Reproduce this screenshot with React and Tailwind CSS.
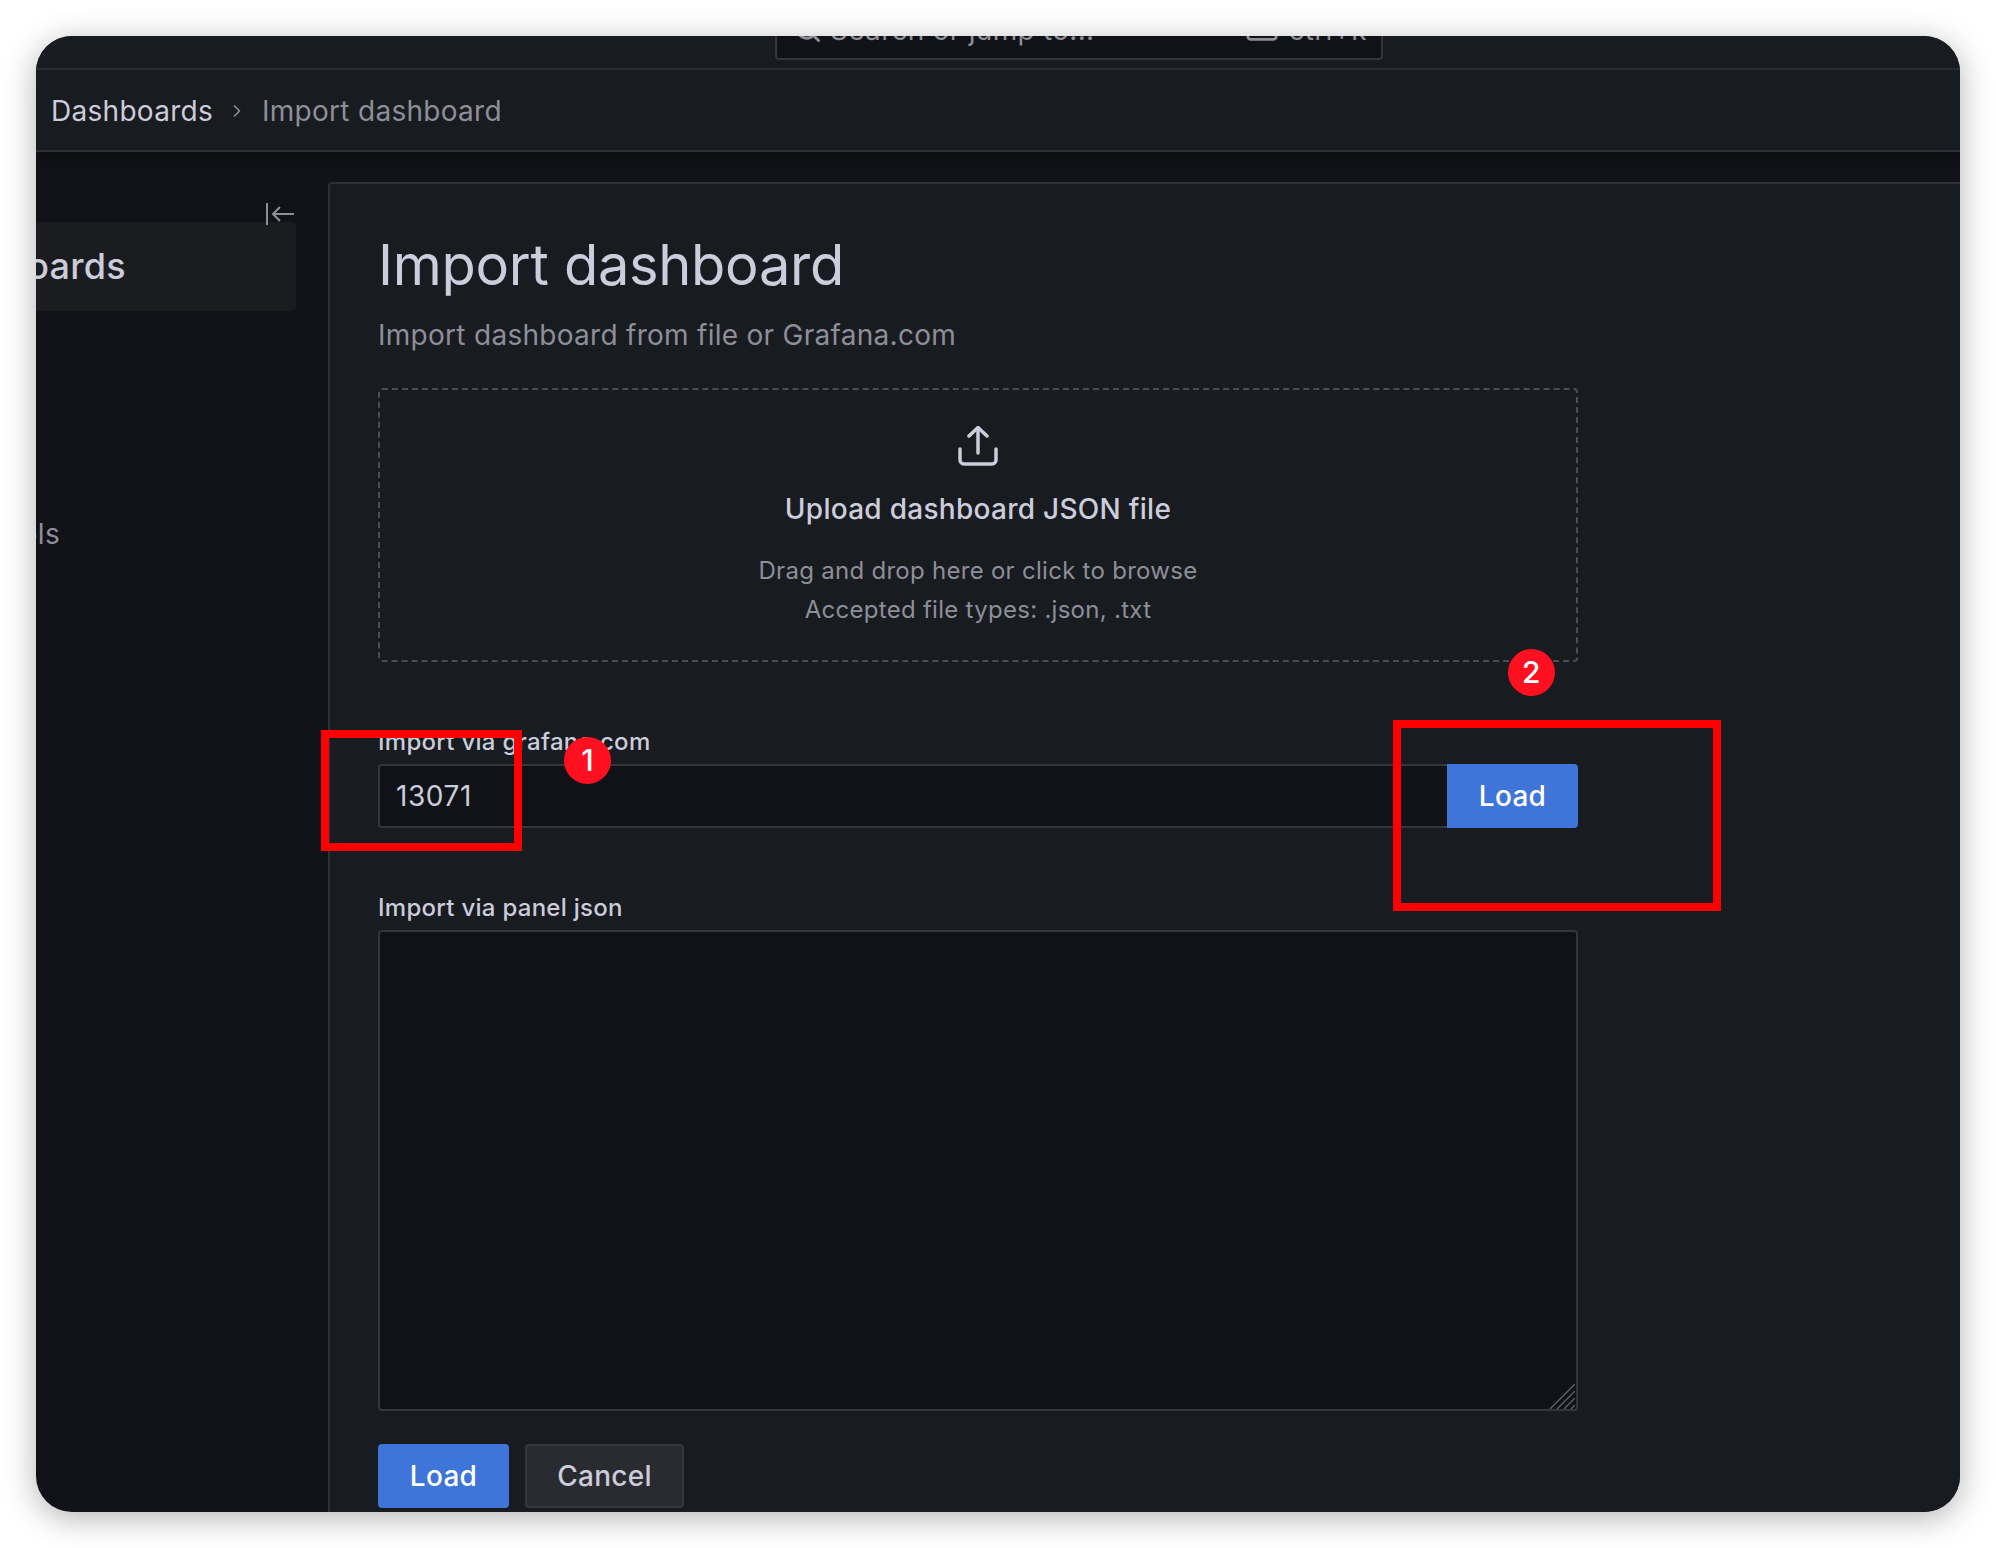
import { Search, Keyboard, ChevronRight } from 'lucide-react';

function Badge({ className, children }) {
  return (
    <div className={`absolute flex h-[47px] w-[47px] items-center justify-center rounded-full bg-[#ff1020] text-[30px] font-medium text-white ${className}`}>
      {children}
    </div>
  );
}

function UploadIcon() {
  return (
    <svg width="40" height="40" viewBox="0 0 40 40" fill="none" stroke="#ccccdc" strokeWidth="3.5" strokeLinecap="round" strokeLinejoin="round">
      <path d="M20 2v25" />
      <path d="M11 10l9-8.500 9 8.500" />
      <path d="M2 23v11a4 4 0 0 0 4 4h28a4 4 0 0 0 4-4V23" />
    </svg>
  );
}

function CollapseIcon() {
  return (
    <svg width="28" height="22" viewBox="0 0 28 22" fill="none" stroke="#8e8e9a" strokeWidth="2">
      <path d="M1 0v22" />
      <path d="M7 11h21" />
      <path d="M14 4l-7 7 7 7" />
    </svg>
  );
}

function ResizeHatch() {
  return (
    <svg className="absolute bottom-[2px] right-[3px]" width="25" height="25" viewBox="0 0 25 25" stroke="#5c5d63" strokeWidth="1.500">
      <path d="M25 0L0 25M25 7L7 25M25 14L14 25M25 21L21 25" />
    </svg>
  );
}

export default function App() {
  return (
    <div className="relative h-[1548px] w-[1996px] bg-white p-[36px] font-['Inter',sans-serif] text-[28px] tracking-[0.01em] text-[#ccccdc]">
      <div className="flex h-[1476px] flex-col overflow-hidden rounded-[36px] bg-[#111217] shadow-[0_6px_32px_rgba(0,0,0,0.3)]">
        <div className="flex h-[34px] shrink-0 items-end border-b-2 border-[#2d3035] bg-[#181b1f] pb-[8px] pl-[739px]">
          <div className="flex h-[60px] w-[608px] shrink-0 items-center rounded-[4px] border-2 border-[#34363b] bg-[#111217] pl-[17px] pr-[14px] text-[#8e8e9a]">
            <Search size={28} strokeWidth={2.5} />
            <span className="ml-[8px]">Search or jump to...</span>
            <Keyboard size={34} className="-mt-[5px] ml-auto" />
            <span className="ml-[10px]">ctrl+k</span>
          </div>
        </div>

        <div className="relative z-10 flex h-[82px] shrink-0 items-center border-b-2 border-[#2d3035] bg-[#181b1f] pl-[15px] pt-[2px] shadow-[0_2px_8px_rgba(0,0,0,0.4)]">
          <span>Dashboards</span>
          <ChevronRight size={20} strokeWidth={2} className="ml-[14px] text-[#8e8e9a]" />
          <span className="ml-[15px] text-[#8e8e9a]">Import dashboard</span>
        </div>

        <div className="flex min-h-0 flex-1">
          <div className="w-[292px] shrink-0 pt-[51px]">
            <div className="-mb-[3px] flex h-[22px] justify-end pr-[34px]">
              <CollapseIcon />
            </div>
            <div className="flex h-[89px] w-[260px] items-center justify-end rounded-r-[4px] bg-[#1b1c20] pr-[170px] text-[36px] font-medium">
              <span className="-translate-y-px whitespace-nowrap">Dashboards</span>
            </div>
            <div className="mt-[195px] flex h-[56px] w-[24px] items-center justify-end overflow-hidden text-[#8e8e9a]">
              <span className="whitespace-nowrap">Library tools</span>
            </div>
          </div>

          <div className="mt-[30px] flex-1 rounded-tl-[4px] border-l-2 border-t-2 border-[#2d3035] bg-[#181b1f] pl-[48px]">
            <div className="w-[1200px]">
              <h1 className="mt-[47px] h-[68px] text-[56px] leading-[68px] tracking-[-0.3px]">Import dashboard</h1>
              <p className="mt-[16px] h-[40px] leading-[40px] text-[#8e8e9a]">Import dashboard from file or Grafana.com</p>

              <div className="mt-[33px] flex h-[274px] flex-col items-center rounded-[4px] border-2 border-dashed border-[#4c4d52] pt-[36px]">
                <UploadIcon />
                <div className="mt-[23px] h-[40px] font-medium leading-[40px]">Upload dashboard JSON file</div>
                <div className="mt-[22px] text-[24px] leading-[39px] text-[#8e8e9a]">Drag and drop here or click to browse</div>
                <div className="text-[24px] leading-[39px] text-[#8e8e9a]">Accepted file types: .json, .txt</div>
              </div>

              <label className="mt-[64px] block h-[32px] text-[24px] font-medium leading-[32px]">Import via grafana.com</label>
              <div className="mt-[6px] flex h-[64px]">
                <input
                  readOnly
                  value="13071"
                  className="min-w-0 flex-1 rounded-l-[4px] border-2 border-r-0 border-[#34363b] bg-[#111217] pl-[16px] tracking-[0.02em] text-[#ccccdc] outline-none"
                />
                <button className="w-[131px] rounded-r-[4px] bg-[#3f74d9] font-medium text-white">Load</button>
              </div>

              <label className="mt-[64px] block h-[32px] text-[24px] font-medium leading-[32px]">Import via panel json</label>
              <div className="relative mt-[6px] h-[481px]">
                <textarea readOnly className="block h-full w-full resize-none rounded-[4px] border-2 border-[#34363b] bg-[#111217] outline-none" />
                <ResizeHatch />
              </div>

              <div className="mt-[33px] flex gap-[16px]">
                <button className="h-[64px] w-[131px] rounded-[4px] bg-[#3f74d9] font-medium text-white">Load</button>
                <button className="h-[64px] w-[159px] rounded-[4px] border-2 border-[#34363b] bg-[#2a2b30] font-medium">Cancel</button>
              </div>
            </div>
          </div>
        </div>
      </div>

      {/* annotations drawn on top of the screenshot */}
      <div className="absolute left-[321px] top-[730px] h-[121px] w-[201px] border-[8px] border-[#ff0000]" />
      <div className="absolute left-[1393px] top-[720px] h-[191px] w-[328px] border-[8px] border-[#ff0000]" />
      <Badge className="left-[564px] top-[737px]">1</Badge>
      <Badge className="left-[1508px] top-[649px]">2</Badge>
    </div>
  );
}
